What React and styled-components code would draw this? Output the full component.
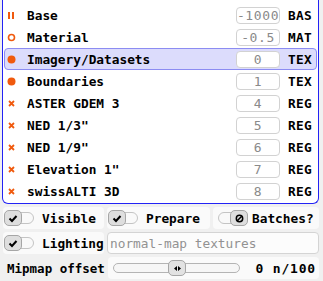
import React from 'react'
import styled, { createGlobalStyle } from 'styled-components'

const GlobalStyle = createGlobalStyle`
  html, body {
    margin: 0;
    padding: 0;
    background: #f0f0f0;
  }
  body {
    width: 323px;
    height: 281px;
    overflow: hidden;
    font-family: 'DejaVu Sans Mono', 'Liberation Mono', monospace;
    color: #000;
  }
`

const ORANGE = '#f05a0e'

const layers = [
  { name: 'Base', icon: 'pause', value: '-1000', tag: 'BAS' },
  { name: 'Material', icon: 'ring', value: '-0.5', tag: 'MAT' },
  { name: 'Imagery/Datasets', icon: 'dot', value: '0', tag: 'TEX', selected: true },
  { name: 'Boundaries', icon: 'dot', value: '1', tag: 'TEX' },
  { name: 'ASTER GDEM 3', icon: 'cross', value: '4', tag: 'REG' },
  { name: 'NED 1/3"', icon: 'cross', value: '5', tag: 'REG' },
  { name: 'NED 1/9"', icon: 'cross', value: '6', tag: 'REG' },
  { name: 'Elevation 1"', icon: 'cross', value: '7', tag: 'REG' },
  { name: 'swissALTI 3D', icon: 'cross', value: '8', tag: 'REG' }
]

const Page = styled.div`
  display: flex;
  flex-direction: column;
  padding: 0 4px 0 2px;
`

const Panel = styled.div`
  background: #fff;
  border: 1px solid #2323f5;
  border-top: none;
  border-radius: 0 0 6px 6px;
  padding: 4px 1px 1px 1px;
`

const Row = styled.div`
  display: grid;
  grid-template-columns: 22px 1fr 44px 36px;
  align-items: center;
  height: 22px;
  box-sizing: border-box;
  border: 1px solid ${p => (p.$selected ? '#8c8cf2' : 'transparent')};
  background: ${p => (p.$selected ? '#dcdcfc' : 'transparent')};
  border-radius: 4px;
`

const IconCell = styled.div`
  width: 13px;
  height: 13px;
  display: flex;
  align-items: center;
  justify-content: center;
`

const Name = styled.span`
  font-weight: bold;
  font-size: 12.8px;
  white-space: nowrap;
`

const NumBox = styled.div`
  height: 17px;
  box-sizing: border-box;
  border: 1px solid #d2d2d2;
  border-radius: 4px;
  background: #fff;
  color: #8a8a8a;
  font-size: 13px;
  letter-spacing: 0.6px;
  display: flex;
  align-items: center;
  justify-content: center;
`

const Tag = styled.span`
  font-weight: bold;
  font-size: 12.8px;
  letter-spacing: 0.3px;
  padding-left: 8px;
`

const Controls = styled.div`
  display: flex;
  flex-direction: column;
  gap: 3px;
  padding: 3px 0 0 1px;
`

const ControlRow = styled.div`
  display: grid;
  grid-template-columns: ${p => p.$cols};
  column-gap: 3px;
  height: 22px;
`

const Cell = styled.div`
  display: flex;
  align-items: center;
  gap: ${p => p.$gap || 8}px;
  padding-left: ${p => p.$pad || 1}px;
  background: #fafafa;
  border-radius: 4px;
  font-weight: bold;
  font-size: 12.8px;
`

const Track = styled.div`
  position: relative;
  width: 30px;
  height: 12px;
  box-sizing: border-box;
  border: 1px solid #c4c4c4;
  border-radius: 6px;
  background: #f9f9f9;
  flex: none;
`

const Knob = styled.div`
  position: absolute;
  top: -3px;
  ${p => (p.$on ? 'left: -1px;' : 'right: -1px;')}
  width: 18px;
  height: 16px;
  box-sizing: border-box;
  border: 1px solid #a6a6a6;
  border-radius: 5px;
  background: #dedede;
  display: flex;
  align-items: center;
  justify-content: center;
`

const TextInput = styled.input`
  height: 22px;
  box-sizing: border-box;
  border: 1px solid #d4d4d4;
  border-radius: 4px;
  background: #fcfcfc;
  padding: 0 0 0 2px;
  margin: 0;
  font-family: 'DejaVu Sans Mono', monospace;
  font-size: 12.8px;
  outline: none;
  &::placeholder {
    color: #929292;
  }
`

const Label = styled.span`
  display: flex;
  align-items: center;
  padding-left: 4px;
  font-weight: bold;
  font-size: 12.5px;
`

const SliderCell = styled.div`
  display: flex;
  align-items: center;
  justify-content: space-between;
  padding: 0 3px 0 5px;
  background: #fafafa;
  border-radius: 4px;
`

const SliderTrack = styled.div`
  position: relative;
  width: 127px;
  height: 10px;
  box-sizing: border-box;
  border: 1px solid #b4b4b4;
  border-radius: 5px;
  background: #f6f6f6;
`

const SliderKnob = styled.div`
  position: absolute;
  top: -4px;
  width: 18px;
  height: 16px;
  box-sizing: border-box;
  border: 1px solid #a6a6a6;
  border-radius: 5px;
  background: #e2e2e2;
  display: flex;
  align-items: center;
  justify-content: center;
`

const Value = styled.span`
  font-weight: bold;
  font-size: 13px;
  letter-spacing: 0.8px;
`

const LayerIcon = ({ kind }) => {
  if (kind === 'pause')
    return (
      <svg width='13' height='13' viewBox='0 0 13 13'>
        <rect x='3' y='3' width='2' height='7' fill={ORANGE} />
        <rect x='7' y='3' width='2' height='7' fill={ORANGE} />
      </svg>
    )
  if (kind === 'ring')
    return (
      <svg width='13' height='13' viewBox='0 0 13 13'>
        <circle cx='6.5' cy='6.5' r='3' fill='none' stroke={ORANGE} strokeWidth='1.6' />
      </svg>
    )
  if (kind === 'dot')
    return (
      <svg width='13' height='13' viewBox='0 0 13 13'>
        <circle cx='6.5' cy='6.5' r='4' fill={ORANGE} />
      </svg>
    )
  return (
    <svg width='13' height='13' viewBox='0 0 13 13'>
      <path d='M4 4 L9 9 M9 4 L4 9' stroke={ORANGE} strokeWidth='1.8' />
    </svg>
  )
}

const Check = () => (
  <svg width='10' height='9' viewBox='0 0 10 9'>
    <path d='M1.5 4.5 L4 7 L8.5 2' fill='none' stroke='#000' strokeWidth='2' />
  </svg>
)

const NoSign = () => (
  <svg width='9' height='9' viewBox='0 0 9 9'>
    <circle cx='4.5' cy='4.5' r='3.2' fill='none' stroke='#000' strokeWidth='1.5' />
    <path d='M2.3 6.7 L6.7 2.3' stroke='#000' strokeWidth='1.5' />
  </svg>
)

const Arrows = () => (
  <svg width='7' height='5' viewBox='0 0 7 5'>
    <path d='M0 2.5 L3 0 L3 5 Z M7 2.5 L4 0 L4 5 Z' fill='#000' />
  </svg>
)

const Toggle = ({ on, children }) => (
  <Track>
    <Knob $on={on}>{children}</Knob>
  </Track>
)

export default function App() {
  const mip = 0
  return (
    <Page>
      <GlobalStyle />
      <Panel>
        {layers.map(l => (
          <Row key={l.name} $selected={l.selected}>
            <IconCell>
              <LayerIcon kind={l.icon} />
            </IconCell>
            <Name>{l.name}</Name>
            <NumBox>{l.value}</NumBox>
            <Tag>{l.tag}</Tag>
          </Row>
        ))}
      </Panel>
      <Controls>
        <ControlRow $cols='101px 103px 1fr'>
          <Cell>
            <Toggle on>
              <Check />
            </Toggle>
            Visible
          </Cell>
          <Cell>
            <Toggle on>
              <Check />
            </Toggle>
            Prepare
          </Cell>
          <Cell $pad={5} $gap={4}>
            <Toggle>
              <NoSign />
            </Toggle>
            Batches?
          </Cell>
        </ControlRow>
        <ControlRow $cols='101px 1fr'>
          <Cell>
            <Toggle on>
              <Check />
            </Toggle>
            Lighting
          </Cell>
          <TextInput placeholder='normal-map textures' />
        </ControlRow>
        <ControlRow $cols='102px 1fr'>
          <Label>Mipmap offset</Label>
          <SliderCell>
            <SliderTrack>
              <SliderKnob style={{ left: 54 + mip }}>
                <Arrows />
              </SliderKnob>
            </SliderTrack>
            <Value>0 n/100</Value>
          </SliderCell>
        </ControlRow>
      </Controls>
    </Page>
  )
}
